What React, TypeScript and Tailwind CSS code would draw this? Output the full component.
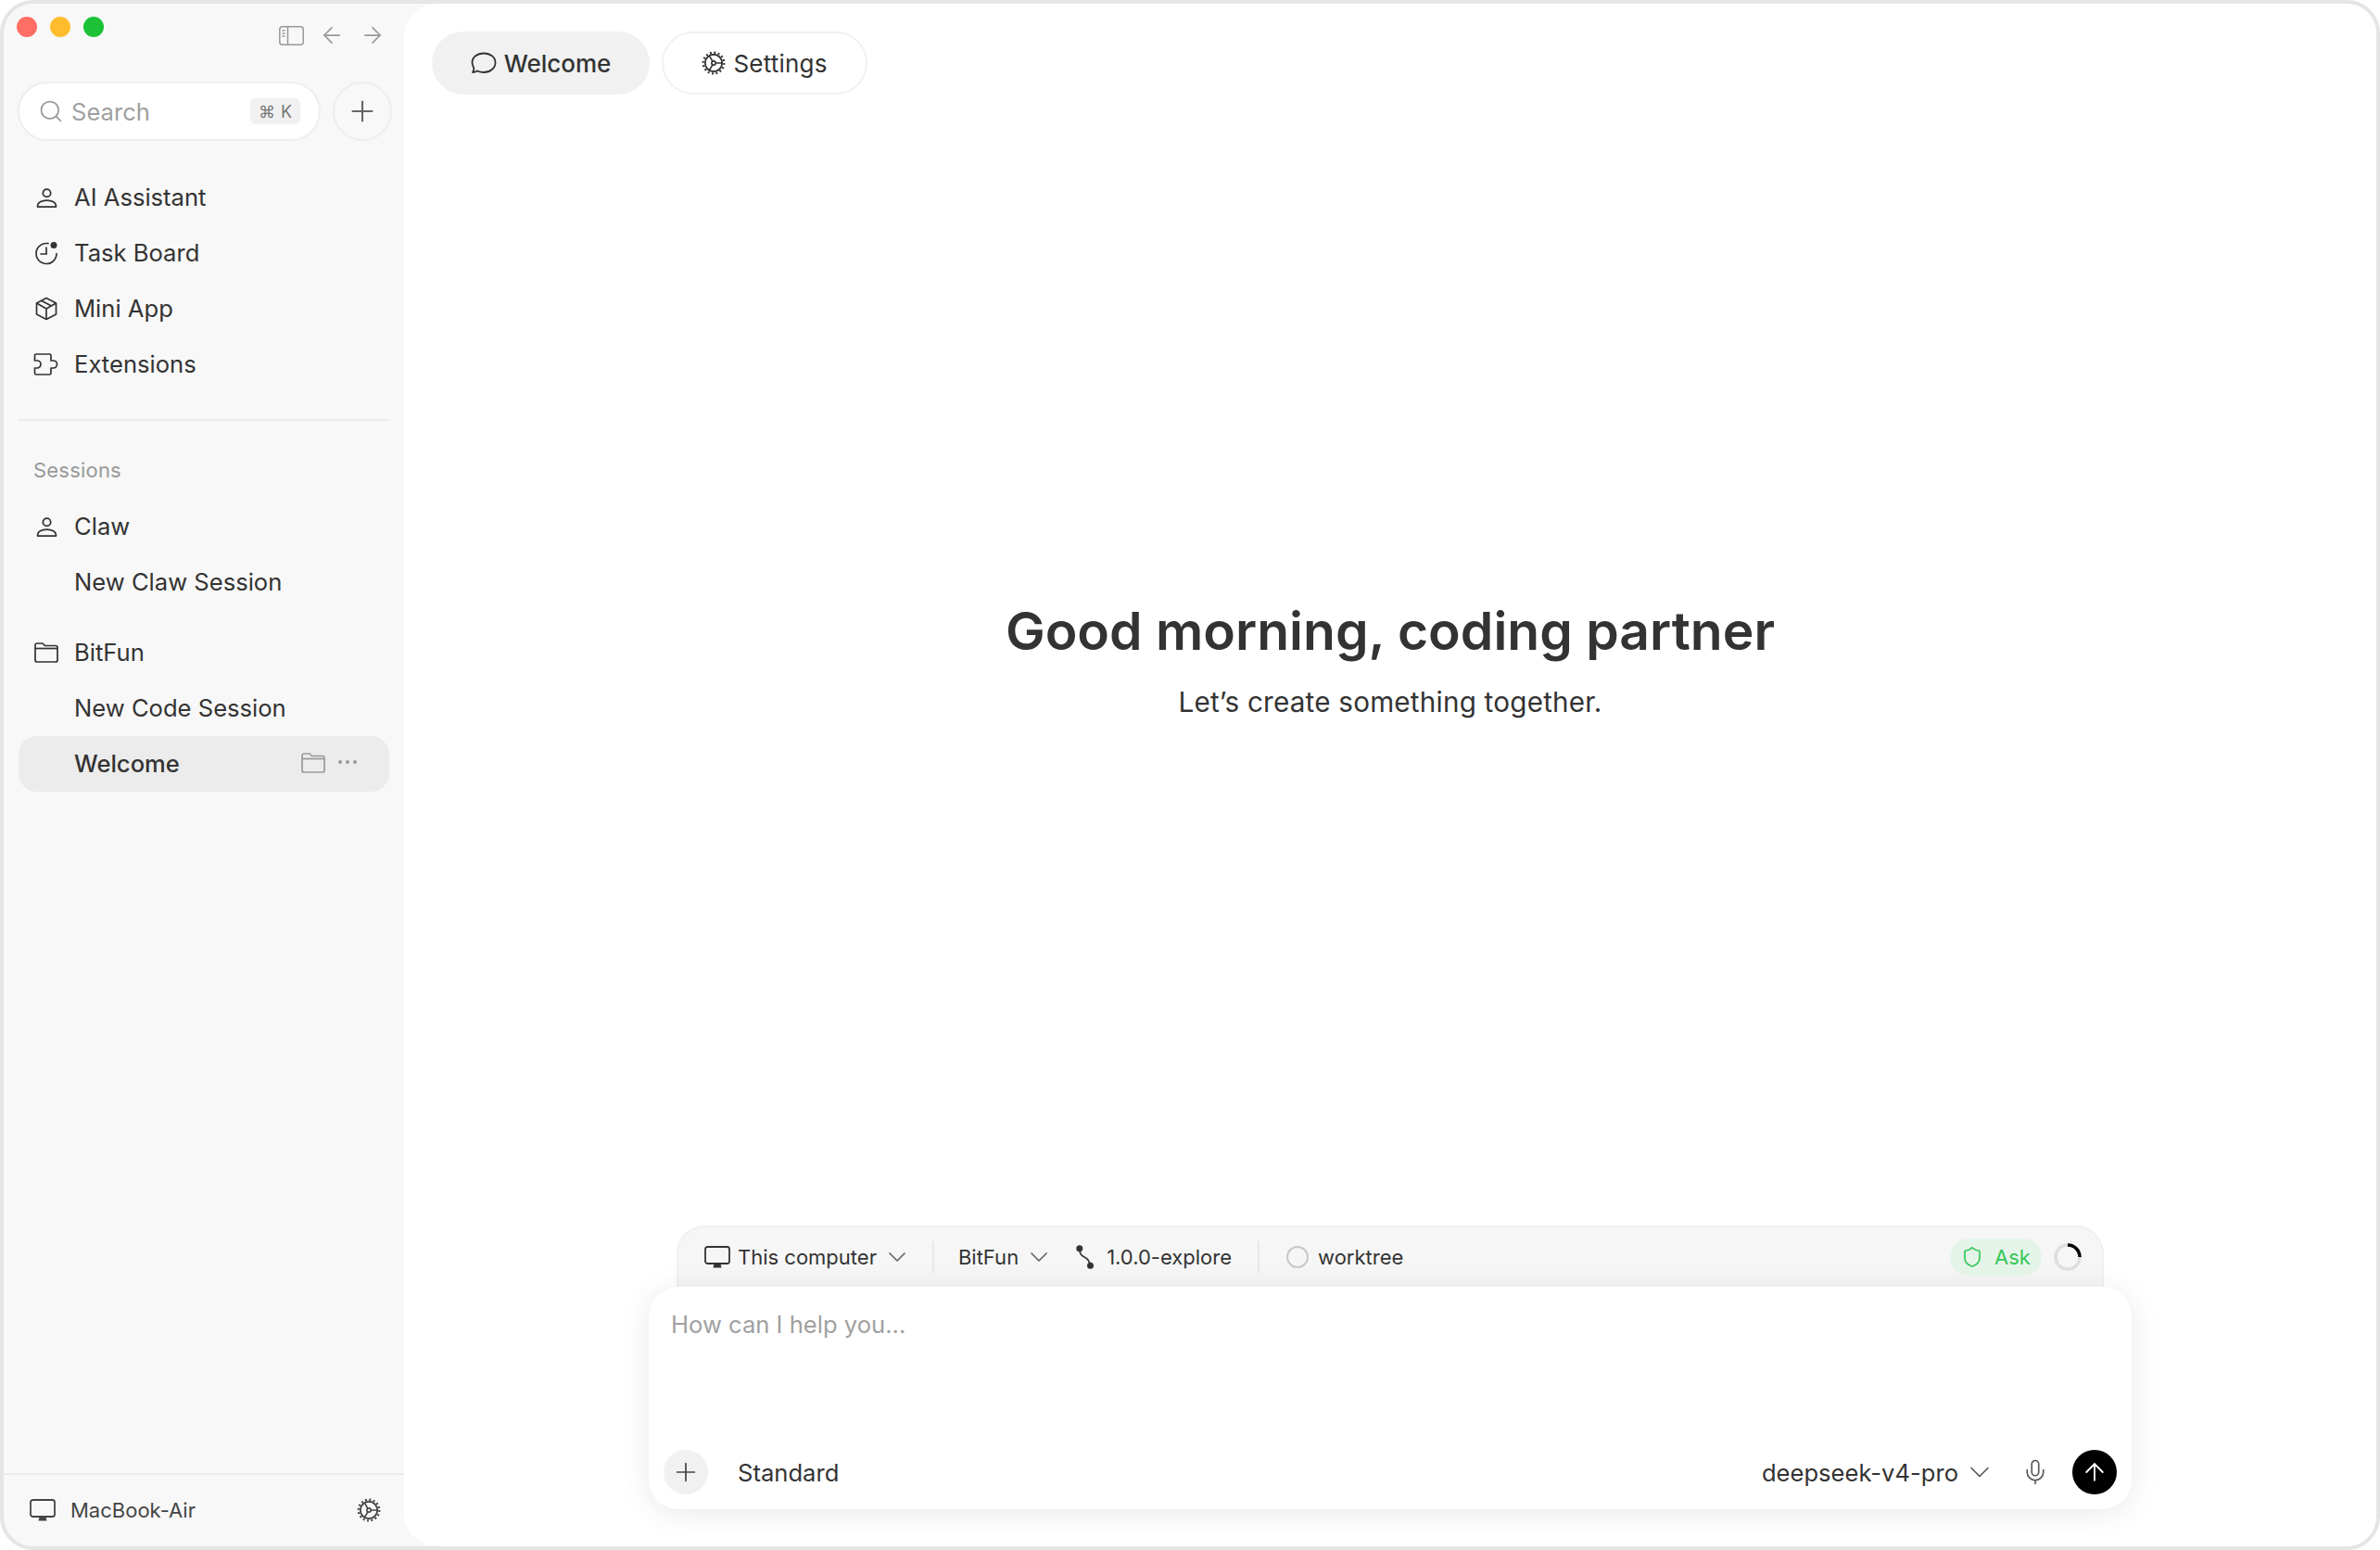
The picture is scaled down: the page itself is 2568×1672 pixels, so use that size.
import { FC, ReactNode } from 'react'
import { ArrowLeft, ArrowRight, ArrowUp, ChevronDown, Mic, Plus, Search, Shield } from 'lucide-react'

const PersonIcon: FC = () => (
  <svg viewBox="0 0 24 24" className="h-[25px] w-[25px]" fill="none" stroke="currentColor" strokeWidth="1.7">
    <circle cx="12" cy="7" r="4" />
    <path d="M2.5 21.2v-1.4c0-2.9 4-5.3 9.500-5.300s9.500 2.400 9.500 5.300v1.400z" strokeLinejoin="round" />
  </svg>
)

const TaskIcon: FC = () => (
  <svg viewBox="0 0 26 26" className="h-[26px] w-[26px]" fill="none" stroke="currentColor" strokeWidth="1.7" strokeLinecap="round">
    <path d="M15 2.700A11 11 0 1 0 24 13.500" />
    <path d="M13 7v7H7" />
    <circle cx="21" cy="4.500" r="3.500" fill="currentColor" stroke="none" />
  </svg>
)

const BoxIcon: FC = () => (
  <svg viewBox="0 0 24 26" className="h-[26px] w-[24px]" fill="none" stroke="currentColor" strokeWidth="1.7" strokeLinejoin="round">
    <path d="M12 1.500 22.500 7v12L12 24.500 1.500 19V7z" />
    <path d="M1.500 7 12 13l10.500-6M12 13v11.500M6.500 4.300 17.500 10" />
  </svg>
)

const PuzzleIcon: FC = () => (
  <svg viewBox="0 0 28 24" className="h-[24px] w-[28px]" fill="none" stroke="currentColor" strokeWidth="1.7" strokeLinejoin="round">
    <path d="M1.500 4V2.500a1.500 1.500 0 0 1 1.500-1.500h14.500a1.500 1.500 0 0 1 1.500 1.500V8h2.500a4 4 0 0 1 0 8H19v5.500a1.500 1.500 0 0 1-1.500 1.500H3a1.500 1.500 0 0 1-1.500-1.500V16h2.500a4 4 0 0 0 0-8H1.500z" />
  </svg>
)

const FolderIcon: FC<{ className?: string }> = ({ className }) => (
  <svg viewBox="0 0 26 22" className={className} fill="none" stroke="currentColor" strokeWidth="1.7" strokeLinejoin="round">
    <path d="M1 3a2 2 0 0 1 2-2h6l2.500 2.500H23a2 2 0 0 1 2 2V19a2 2 0 0 1-2 2H3a2 2 0 0 1-2-2z" />
    <path d="M1 6.500h24" />
  </svg>
)

const MonitorIcon: FC<{ className?: string }> = ({ className }) => (
  <svg viewBox="0 0 28 25" className={className} fill="none" stroke="currentColor" strokeWidth="1.800">
    <rect x="1" y="1" width="26" height="18" rx="2.500" />
    <path d="M9.500 23.500h9l-1-4h-7z" fill="currentColor" stroke="none" />
  </svg>
)

const GearIcon: FC<{ className?: string }> = ({ className }) => (
  <svg viewBox="0 0 24 24" className={className} fill="none" stroke="currentColor">
    <circle cx="12" cy="12" r="8.500" strokeWidth="1.700" />
    <circle cx="12" cy="12" r="10.500" strokeWidth="2" strokeDasharray="1.800 2.320" />
    <circle cx="12" cy="12" r="2" strokeWidth="1.500" />
    <path d="M14 12h7M11 10.300 7.500 4.500M11 13.700l-3.500 5.800" strokeWidth="1.500" />
  </svg>
)

const SidebarIcon: FC = () => (
  <svg viewBox="0 0 27 21" className="h-[21px] w-[27px] text-[#999]" fill="none" stroke="currentColor" strokeWidth="1.500">
    <rect x="0.800" y="0.800" width="25.400" height="19.400" rx="3" />
    <path d="M9.500 1v19" />
    <path d="M3.500 5h3M3.500 8h3M3.500 11h3" strokeWidth="1.300" />
  </svg>
)

const BranchIcon: FC = () => (
  <svg viewBox="0 0 20 26" className="h-[26px] w-[20px] text-[#333]" fill="none" stroke="currentColor">
    <path d="M4 4c0 5 1 7 5 9s6 4 6 9" strokeWidth="1.700" />
    <circle cx="3.800" cy="3.800" r="3.500" fill="currentColor" stroke="none" />
    <circle cx="15.500" cy="22.200" r="3.500" fill="currentColor" stroke="none" />
  </svg>
)

const SpeechIcon: FC = () => (
  <svg viewBox="0 0 28 24" className="h-[24px] w-[28px]" fill="none" stroke="currentColor" strokeWidth="1.800" strokeLinejoin="round">
    <path d="M14 1.500c7 0 12.500 4 12.500 10s-5.500 10.500-12.500 10.500c-2.500 0-5-.5-7-1.500-1.500 1-3 1.500-5 1.500 1-1.500 1.500-3 1.300-4.500C2.300 15.500 1.500 13.500 1.500 11.500c0-6 5.500-10 12.500-10z" />
  </svg>
)

const NavRow: FC<{ icon?: ReactNode; label: string; className?: string }> = ({ icon, label, className }) => (
  <div className={`flex h-[60px] items-center ${className ?? ''}`}>
    <span className="flex w-[60px] shrink-0 items-center justify-center">{icon}</span>
    <span className="pt-[1px] text-[25.6px]">{label}</span>
  </div>
)

const App: FC = () => {
  return (
    <div className="h-screen w-full bg-white font-['Inter',sans-serif] text-[#333]">
      <div className="flex h-[1672px] w-[2568px] overflow-hidden rounded-[36px] border-4 border-[#e5e5e5] bg-[#f8f8f8]">
        {/* 侧边栏 */}
        <aside className="flex w-[432px] shrink-0 flex-col">
          <div className="flex h-[84px] justify-between pr-[20px] pl-[14px]">
            <div className="flex gap-[14px] pt-[14px]">
              <span className="h-[22px] w-[22px] rounded-full bg-[#ff6d64]" />
              <span className="h-[22px] w-[22px] rounded-full bg-[#ffbd2e]" />
              <span className="h-[22px] w-[22px] rounded-full bg-[#1bc236]" />
            </div>
            <div className="mt-[21px] flex h-[26px] items-center gap-[16px] text-[#999]">
              <SidebarIcon />
              <ArrowLeft className="h-[28px] w-[28px]" strokeWidth={1.5} />
              <ArrowRight className="h-[28px] w-[28px]" strokeWidth={1.5} />
            </div>
          </div>

          <div className="flex gap-[13px] pl-[15px]">
            <div className="flex h-[64px] w-[327px] items-center rounded-full border-2 border-[#eeeeee] bg-white pr-[20px] pl-[20px]">
              <Search className="h-[28px] w-[28px] text-[#999]" strokeWidth={1.5} />
              <span className="ml-[8px] pt-[2px] text-[25.6px] text-[#a0a0a0]">Search</span>
              <span className="ml-auto flex h-[28px] w-[54px] items-center justify-center gap-[6px] rounded-[6px] bg-[#f1f1f1] text-[18px] text-[#777]">
                ⌘<span>K</span>
              </span>
            </div>
            <div className="flex h-[64px] w-[64px] items-center justify-center rounded-full border-2 border-[#eeeeee]">
              <Plus className="h-[36px] w-[36px] text-[#666]" strokeWidth={1.4} />
            </div>
          </div>

          <nav className="mt-[31px] px-[16px]">
            <NavRow icon={<PersonIcon />} label="AI Assistant" />
            <NavRow icon={<TaskIcon />} label="Task Board" />
            <NavRow icon={<BoxIcon />} label="Mini App" />
            <NavRow icon={<PuzzleIcon />} label="Extensions" />
          </nav>

          <div className="mx-[16px] mt-[29px] h-[2px] bg-[#ececec]" />

          <div className="mt-[33px] flex h-[40px] items-center pl-[32px] text-[22px] tracking-[0.2px] text-[#999]">Sessions</div>

          <div className="mt-[11px] px-[16px]">
            <NavRow icon={<PersonIcon />} label="Claw" />
            <NavRow label="New Claw Session" />
            <NavRow icon={<FolderIcon className="h-[22px] w-[26px]" />} label="BitFun" className="mt-[16px]" />
            <NavRow label="New Code Session" />
            <div className="flex h-[60px] items-center rounded-[20px] bg-[#ececec]">
              <span className="w-[60px] shrink-0" />
              <span className="pt-[1px] text-[25.6px] font-medium">Welcome</span>
              <FolderIcon className="mb-[2px] ml-auto h-[22px] w-[26px] text-[#999]" />
              <span className="mr-[35px] mb-[4px] ml-[14px] flex gap-[4px]">
                <i className="h-[4px] w-[4px] rounded-full bg-[#999]" />
                <i className="h-[4px] w-[4px] rounded-full bg-[#999]" />
                <i className="h-[4px] w-[4px] rounded-full bg-[#999]" />
              </span>
            </div>
          </div>

          <div className="mt-auto flex h-[79px] items-center border-t-2 border-[#ececec] pr-[25px] pl-[28px] text-[#444]">
            <MonitorIcon className="h-[25px] w-[28px]" />
            <span className="ml-[16px] text-[22px]">MacBook-Air</span>
            <GearIcon className="mb-[2px] ml-auto h-[26px] w-[26px]" />
          </div>
        </aside>

        {/* 主区域 */}
        <main className="flex min-w-0 flex-1 flex-col rounded-l-[36px] bg-white">
          <div className="flex gap-[13px] pt-[30px] pl-[30px]">
            <div className="flex h-[68px] w-[235px] items-center justify-center gap-[8px] rounded-full bg-[#f1f1f1] text-[26px] font-medium">
              <SpeechIcon />
              Welcome
            </div>
            <div className="flex h-[68px] w-[222px] items-center justify-center gap-[8px] rounded-full border-2 border-[#f1f1f1] text-[26px] tracking-[0.2px]">
              <GearIcon className="h-[26px] w-[26px]" />
              Settings
            </div>
          </div>

          <h1 className="mt-[543px] text-center text-[57px] leading-[72px] font-semibold">Good morning, coding partner</h1>
          <p className="mt-[20px] text-center text-[29.700px] leading-[40px] tracking-[0.2px]">Let’s create something together.</p>

          <div className="mx-auto mt-auto mb-[40px] w-[1600px]">
            <div className="mx-[30px] flex h-[66px] items-center rounded-t-[30px] border-2 border-b-0 border-[#f0f0f0] bg-[#f6f6f6] pr-[22px] pl-[28px] text-[22px]">
              <MonitorIcon className="h-[25px] w-[28px]" />
              <span className="ml-[8px]">This computer</span>
              <ChevronDown className="ml-[6px] h-[32px] w-[32px] text-[#666]" strokeWidth={1.3} />
              <span className="ml-[22px] h-[34px] w-[2px] bg-[#e8e8e8]" />
              <span className="ml-[26px]">BitFun</span>
              <ChevronDown className="ml-[6px] h-[32px] w-[32px] text-[#666]" strokeWidth={1.3} />
              <span className="ml-[24px]">
                <BranchIcon />
              </span>
              <span className="ml-[13px]">1.0.0-explore</span>
              <span className="ml-[28px] h-[34px] w-[2px] bg-[#e8e8e8]" />
              <span className="ml-[29px] h-[24px] w-[24px] rounded-full border-2 border-[#c8c8c8]" />
              <span className="ml-[10px]">worktree</span>
              <span className="ml-auto flex h-[40px] w-[99px] items-center justify-center gap-[12px] rounded-full bg-[#e5f4e9] text-[#34c759]">
                <Shield className="h-[24px] w-[24px]" strokeWidth={1.7} />
                Ask
              </span>
              {/* 上下文用量圆环 */}
              <svg viewBox="0 0 30 30" className="ml-[13px] h-[30px] w-[30px]" fill="none" strokeWidth="3.500">
                <circle cx="15" cy="15" r="13" stroke="#dedede" />
                <path d="M15 2a13 13 0 0 1 13 13" stroke="#000" />
              </svg>
            </div>

            <div className="flex h-[240px] flex-col rounded-[32px] bg-white px-[16px] pt-[25px] pb-[16px] shadow-[0_4px_32px_rgba(0,0,0,0.09)]">
              <div className="pl-[8px] text-[25.6px] leading-[32px] text-[#a0a0a0]">How can I help you...</div>
              <div className="mt-auto flex items-center">
                <span className="flex h-[48px] w-[48px] items-center justify-center rounded-full bg-[#f1f1f1]">
                  <Plus className="h-[32px] w-[32px] text-[#444]" strokeWidth={1.3} />
                </span>
                <span className="ml-[32px] pt-[2px] text-[25.6px]">Standard</span>
                <span className="ml-auto pt-[2px] text-[25.6px]">deepseek-v4-pro</span>
                <ChevronDown className="ml-[5px] h-[36px] w-[36px] text-[#555]" strokeWidth={1.1} />
                <Mic className="ml-[27px] h-[30px] w-[30px] text-[#555]" strokeWidth={1.3} />
                <span className="ml-[25px] flex h-[48px] w-[48px] items-center justify-center rounded-full bg-black">
                  <ArrowUp className="h-[30px] w-[30px] text-white" strokeWidth={1.5} />
                </span>
              </div>
            </div>
          </div>
        </main>
      </div>
    </div>
  )
}

export default App
